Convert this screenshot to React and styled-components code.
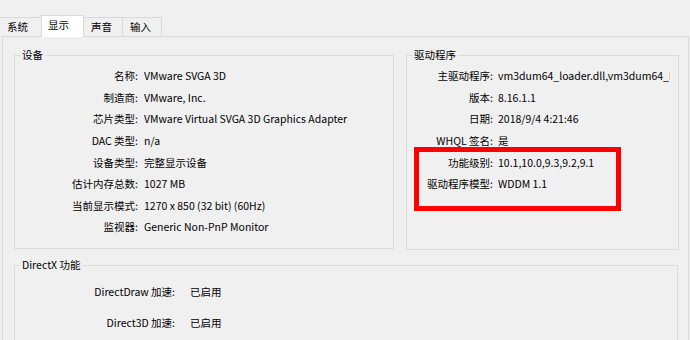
import React from "react";
import styled, { createGlobalStyle } from "styled-components";

const GlobalStyle = createGlobalStyle`
  html, body {
    margin: 0;
    padding: 0;
    background: #f0f0f0;
  }
  body {
    font-family: "Noto Sans CJK SC", "Noto Sans", sans-serif;
    font-size: 10.5px;
    color: #000;
  }
`;

const Page = styled.div`
  width: 690px;
  height: 340px;
  overflow: hidden;
  background: #f0f0f0;
  display: flex;
  flex-direction: column;
`;

const TabStrip = styled.div`
  display: flex;
  flex-shrink: 0;
  align-items: flex-end;
  height: 36px;
  position: relative;
  z-index: 1;
`;

const Tab = styled.div`
  box-sizing: border-box;
  width: ${(p) => p.$w}px;
  height: ${(p) => (p.$active ? 22 : 19)}px;
  margin-bottom: ${(p) => (p.$active ? -1 : 0)}px;
  margin-left: -1px;
  padding-left: ${(p) => (p.$active ? 6 : 7)}px;
  border: 1px solid #d9d9d9;
  border-bottom: none;
  background: ${(p) => (p.$active ? "#ffffff" : "#f0f0f0")};
  line-height: ${(p) => (p.$active ? 18 : 17)}px;
  white-space: nowrap;
  &:first-child {
    margin-left: 0;
    border-left: none;
  }
`;

const Panel = styled.div`
  flex: 1 0 auto;
  margin: 0 1px 0 2px;
  border: 1px solid #d9d9d9;
  border-bottom: none;
  padding: 10px 9px 0 11px;
  display: flex;
  flex-direction: column;
  gap: 7px;
`;

const GroupRow = styled.div`
  display: flex;
  gap: 12px;
`;

const Group = styled.fieldset`
  box-sizing: border-box;
  margin: 0;
  min-width: 0;
  position: relative;
  width: ${(p) => (p.$w ? `${p.$w}px` : "auto")};
  flex: ${(p) => (p.$w ? "none" : 1)};
  height: ${(p) => (p.$h ? `${p.$h}px` : "auto")};
  border: 1px solid #dcdcdc;
  padding: ${(p) => p.$pad || "2px 8px 0 0"};
`;

const Legend = styled.legend`
  margin-left: 5px;
  padding: 0 2px;
  line-height: 16px;
`;

const InfoGrid = styled.div`
  display: grid;
  grid-template-columns: ${(p) => p.$label}px minmax(0, 1fr);
  grid-auto-rows: ${(p) => p.$row}px;
  column-gap: ${(p) => p.$gap}px;
  align-items: center;
`;

const Label = styled.div`
  text-align: right;
  white-space: nowrap;
`;

const Value = styled.div`
  white-space: nowrap;
  overflow: hidden;
`;

const Highlight = styled.div`
  position: absolute;
  left: 7px;
  top: 84px;
  width: 207px;
  height: 64px;
  box-sizing: border-box;
  border: 5px solid #ff0000;
  pointer-events: none;
`;

const device = [
  ["名称:", "VMware SVGA 3D"],
  ["制造商:", "VMware, Inc."],
  ["芯片类型:", "VMware Virtual SVGA 3D Graphics Adapter"],
  ["DAC 类型:", "n/a"],
  ["设备类型:", "完整显示设备"],
  ["估计内存总数:", "1027 MB"],
  ["当前显示模式:", "1270 x 850 (32 bit) (60Hz)"],
  ["监视器:", "Generic Non-PnP Monitor"],
];

const driver = [
  ["主驱动程序:", "vm3dum64_loader.dll,vm3dum64_loader.dll"],
  ["版本:", "8.16.1.1"],
  ["日期:", "2018/9/4 4:21:46"],
  ["WHQL 签名:", "是"],
  ["功能级别:", "10.1,10.0,9.3,9.2,9.1"],
  ["驱动程序模型:", "WDDM 1.1"],
];

const directx = [
  ["DirectDraw 加速:", "已启用"],
  ["Direct3D 加速:", "已启用"],
];

function Rows({ items }) {
  return items.map(([k, v]) => (
    <React.Fragment key={k}>
      <Label>{k}</Label>
      <Value>{v}</Value>
    </React.Fragment>
  ));
}

export default function App() {
  return (
    <>
      <GlobalStyle />
      <Page>
        <TabStrip>
          <Tab $w={42}>系统</Tab>
          <Tab $w={43} $active>显示</Tab>
          <Tab $w={40}>声音</Tab>
          <Tab $w={40}>输入</Tab>
        </TabStrip>
        <Panel>
          <GroupRow>
            <Group $w={380} $h={202}>
              <Legend>设备</Legend>
              <InfoGrid $label={123} $gap={6} $row={21.57}>
                <Rows items={device} />
              </InfoGrid>
            </Group>
            <Group $h={203}>
              <Legend>驱动程序</Legend>
              <InfoGrid $label={86} $gap={5} $row={21.57}>
                <Rows items={driver} />
              </InfoGrid>
              <Highlight />
            </Group>
          </GroupRow>
          <Group $w={664} $h={120} $pad="3px 8px 0 0">
            <Legend>DirectX 功能</Legend>
            <InfoGrid $label={160} $gap={15} $row={31}>
              <Rows items={directx} />
            </InfoGrid>
          </Group>
        </Panel>
      </Page>
    </>
  );
}
